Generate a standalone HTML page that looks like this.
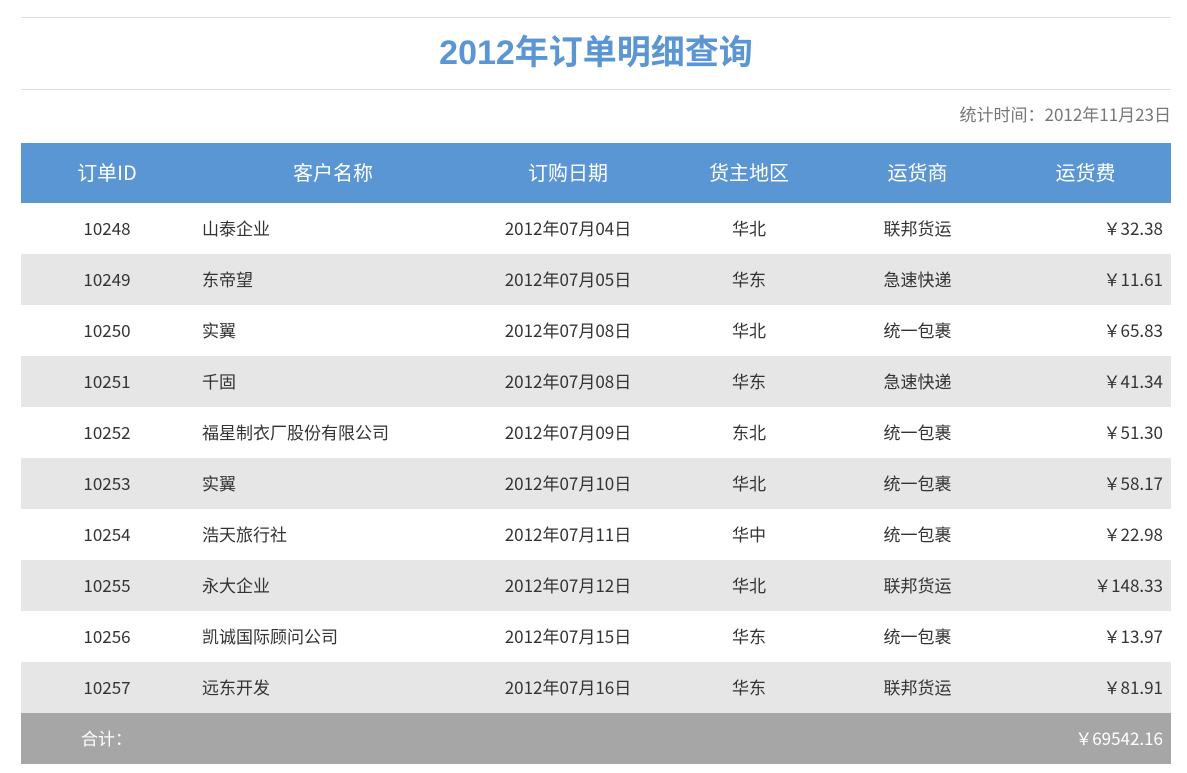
<!DOCTYPE html>
<html><head><meta charset="utf-8"><style>
*{margin:0;padding:0;box-sizing:border-box}
body{width:1187px;height:773px;background:#fff;font-family:"Noto Sans CJK SC","Liberation Sans",sans-serif;color:#333;overflow:hidden}
.l1{position:absolute;left:21px;width:1150px;top:17px;height:1px;background:#ddd}
.l2{position:absolute;left:21px;width:1150px;top:89px;height:1px;background:#ddd}
h1{position:absolute;left:21px;width:1150px;top:31px;text-align:center;font-size:34px;line-height:44px;color:#5b96d4;font-weight:bold;font-family:"Liberation Sans","Noto Sans CJK SC",sans-serif}
.stat{position:absolute;right:16px;top:103px;font-size:17px;line-height:22px;color:#777}
table{position:absolute;left:21px;top:143px;width:1150px;border-collapse:collapse;table-layout:fixed}
th{height:60px;background:#5b96d4;color:#fff;font-weight:normal;font-size:20px;line-height:1;padding-bottom:3px}
td{height:51px;font-size:17px;text-align:center;line-height:1;vertical-align:middle;padding-bottom:3px}
tr:nth-child(even) td{background:#e6e6e6}
td.n{text-align:left;padding-left:9px}
td.f{text-align:right;padding-right:8px}
tr.ft td{background:#a6a6a6!important;color:#fff;height:51px}
</style></head><body>
<div class="l1"></div><h1>2012年订单明细查询</h1><div class="l2"></div>
<div class="stat">统计时间：2012年11月23日</div>
<table>
<colgroup><col style="width:172px"><col style="width:280px"><col style="width:190px"><col style="width:172px"><col style="width:165px"><col style="width:171px"></colgroup>
<thead><tr><th>订单ID</th><th>客户名称</th><th>订购日期</th><th>货主地区</th><th>运货商</th><th>运货费</th></tr></thead>
<tbody>
<tr><td>10248</td><td class="n">山泰企业</td><td>2012年07月04日</td><td>华北</td><td>联邦货运</td><td class="f">￥32.38</td></tr>
<tr><td>10249</td><td class="n">东帝望</td><td>2012年07月05日</td><td>华东</td><td>急速快递</td><td class="f">￥11.61</td></tr>
<tr><td>10250</td><td class="n">实翼</td><td>2012年07月08日</td><td>华北</td><td>统一包裹</td><td class="f">￥65.83</td></tr>
<tr><td>10251</td><td class="n">千固</td><td>2012年07月08日</td><td>华东</td><td>急速快递</td><td class="f">￥41.34</td></tr>
<tr><td>10252</td><td class="n">福星制衣厂股份有限公司</td><td>2012年07月09日</td><td>东北</td><td>统一包裹</td><td class="f">￥51.30</td></tr>
<tr><td>10253</td><td class="n">实翼</td><td>2012年07月10日</td><td>华北</td><td>统一包裹</td><td class="f">￥58.17</td></tr>
<tr><td>10254</td><td class="n">浩天旅行社</td><td>2012年07月11日</td><td>华中</td><td>统一包裹</td><td class="f">￥22.98</td></tr>
<tr><td>10255</td><td class="n">永大企业</td><td>2012年07月12日</td><td>华北</td><td>联邦货运</td><td class="f">￥148.33</td></tr>
<tr><td>10256</td><td class="n">凯诚国际顾问公司</td><td>2012年07月15日</td><td>华东</td><td>统一包裹</td><td class="f">￥13.97</td></tr>
<tr><td>10257</td><td class="n">远东开发</td><td>2012年07月16日</td><td>华东</td><td>联邦货运</td><td class="f">￥81.91</td></tr>
<tr class="ft"><td style="text-align:left;padding-left:60px">合计：</td><td></td><td></td><td></td><td></td><td class="f">￥69542.16</td></tr>
</tbody></table>
</body></html>
